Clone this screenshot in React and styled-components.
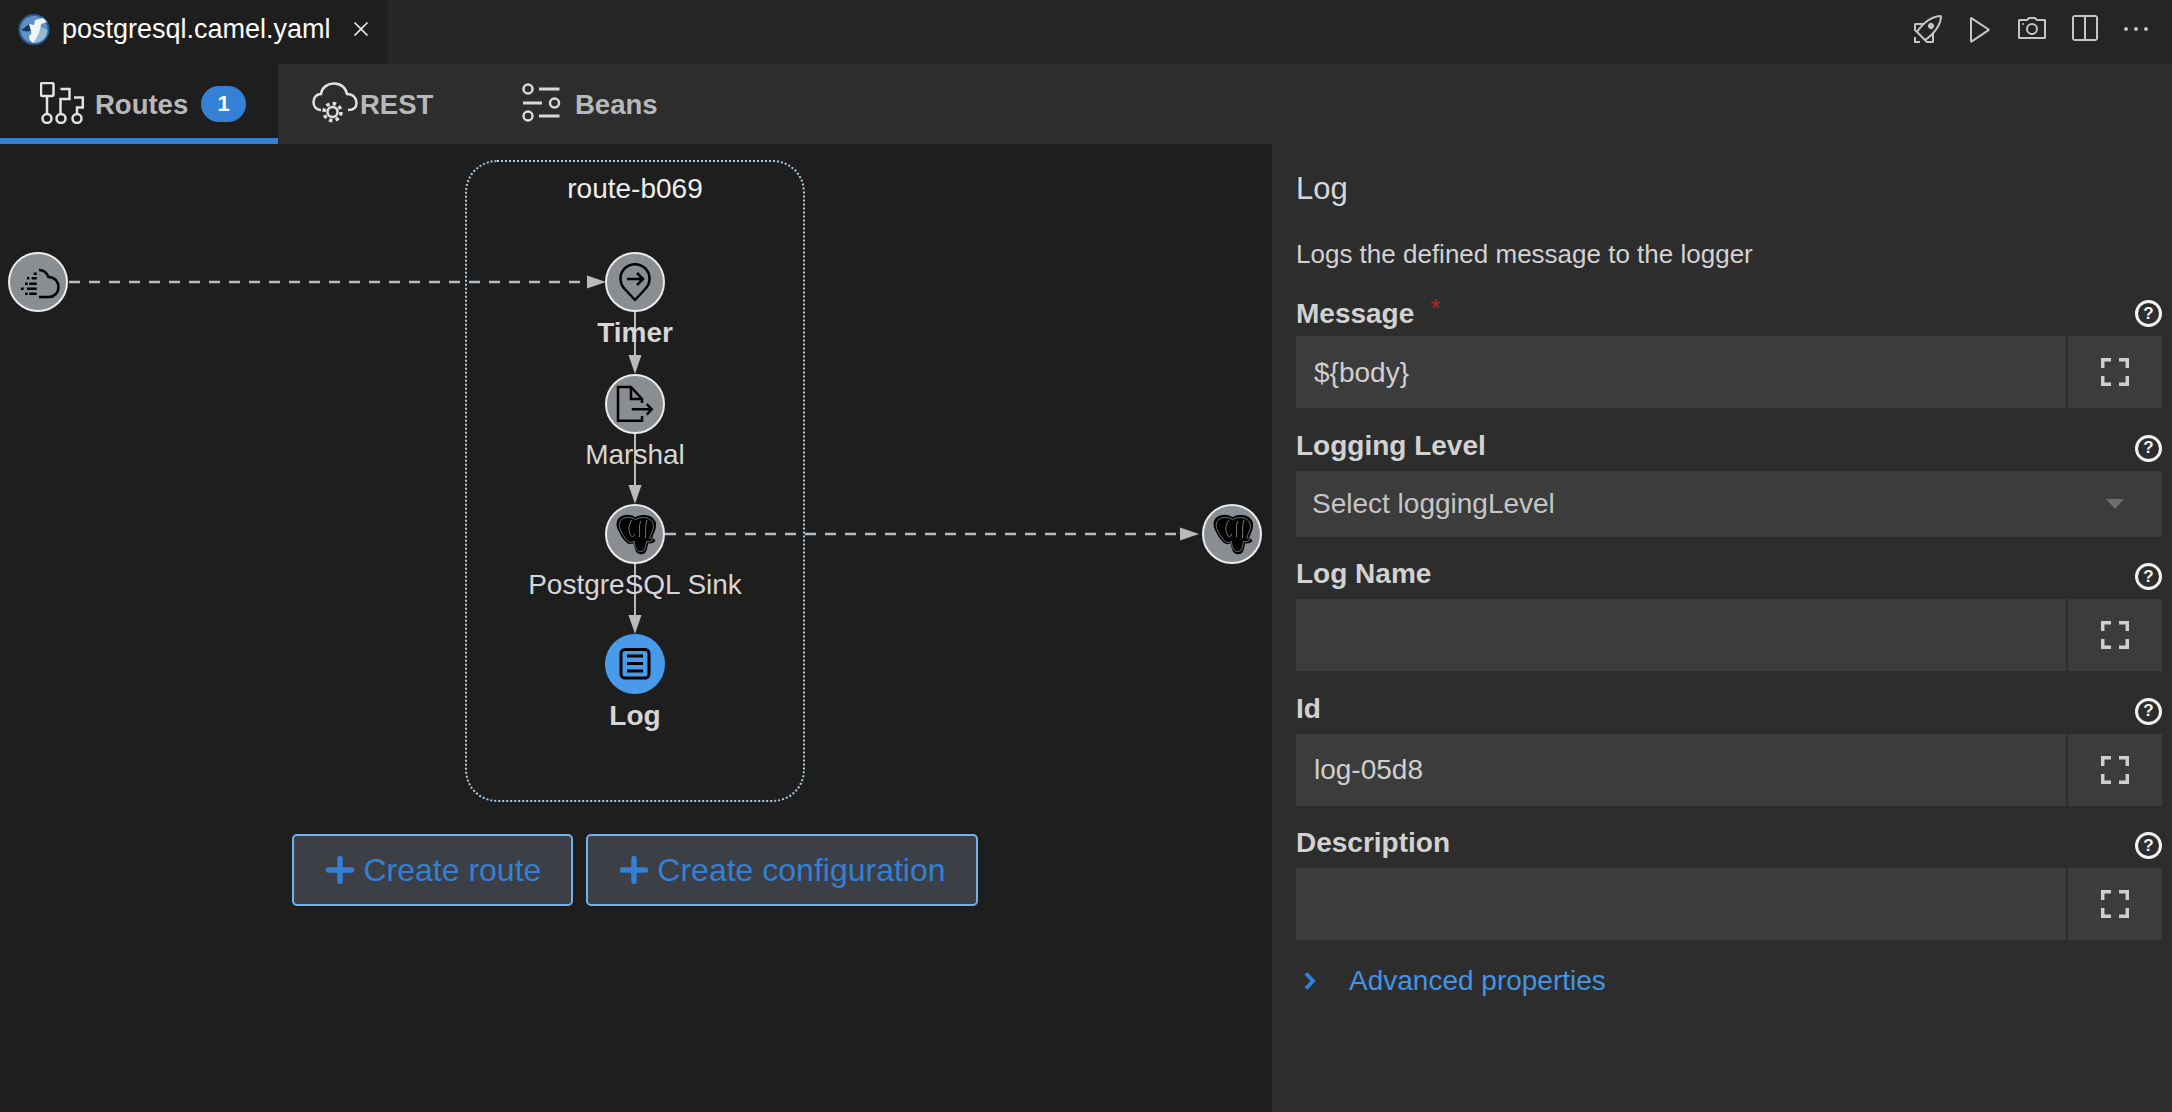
import React from "react";
import styled, { createGlobalStyle } from "styled-components";
import { VscRocket, VscPlay, VscDeviceCamera, VscSplitHorizontal, VscEllipsis, VscClose } from "react-icons/vsc";

const GlobalStyle = createGlobalStyle`
  html, body {
    margin: 0;
    padding: 0;
    background: #1e1e1e;
    overflow: hidden;
  }
  body {
    font-family: "Liberation Sans", Arial, sans-serif;
  }
`;

const Page = styled.div`
  width: 2172px;
  height: 1112px;
  display: flex;
  flex-direction: column;
  background: #1e1e1e;
`;

const EditorBar = styled.div`
  height: 64px;
  flex: none;
  display: flex;
  justify-content: space-between;
  background: #252526;
`;

const FileTab = styled.div`
  width: 387px;
  display: flex;
  align-items: center;
  padding: 0 0 6px 18px;
  box-sizing: border-box;
  background: #1e1e1e;
  color: #ffffff;
  font-size: 27px;
`;

const FileName = styled.span`
  margin-left: 12px;
`;

const CloseBtn = styled.span`
  display: flex;
  margin-left: 17px;
  font-size: 26px;
  color: #e8e8e8;
`;

const Actions = styled.div`
  display: flex;
  align-items: center;
  gap: 20px;
  padding: 0 20px 6px 0;
  font-size: 32px;
  color: #c5c5c5;
  svg {
    display: block;
  }
`;

const TabRow = styled.div`
  height: 80px;
  flex: none;
  display: flex;
  background: #2d2d2d;
`;

const Tab = styled.div`
  width: ${(p) => p.$width}px;
  box-sizing: border-box;
  display: flex;
  align-items: center;
  gap: ${(p) => p.$gap}px;
  padding: 8px 0 0 ${(p) => p.$pad}px;
  background: ${(p) => (p.$active ? "#1e1e1e" : "#2d2d2d")};
  border-bottom: 6px solid ${(p) => (p.$active ? "#3380d4" : "transparent")};
  color: #b8b8bb;
  font-size: 27.5px;
  font-weight: 700;
  svg {
    margin-top: -4px;
  }
`;

const Badge = styled.span`
  width: 45px;
  height: 36px;
  margin: -3px 0 0 3px;
  border-radius: 18px;
  background: #3380d4;
  color: #ffffff;
  font-size: 22px;
  display: flex;
  align-items: center;
  justify-content: center;
`;

const Body = styled.div`
  flex: 1;
  display: flex;
  min-height: 0;
`;

const Canvas = styled.div`
  width: 1272px;
  flex: none;
  display: flex;
  flex-direction: column;
  background: #1e1e1e;
`;

const Stage = styled.div`
  position: relative;
  height: 690px;
  flex: none;
`;

const RouteBox = styled.div`
  position: absolute;
  left: 465px;
  top: 16px;
  width: 340px;
  height: 642px;
  box-sizing: border-box;
  border: 2px dotted #a9cde6;
  border-radius: 32px;
`;

const Edges = styled.svg`
  position: absolute;
  left: 0;
  top: 0;
`;

const Node = styled.div`
  position: absolute;
  left: ${(p) => p.$x - 30}px;
  top: ${(p) => p.$y - 30}px;
  width: 60px;
  height: 60px;
  box-sizing: border-box;
  border-radius: 50%;
  border: 2px solid ${(p) => (p.$selected ? "#4a9aec" : "#ececec")};
  background: ${(p) => (p.$selected ? "#4a9aec" : "#8a8d91")};
  display: flex;
  align-items: center;
  justify-content: center;
  svg {
    flex: none;
    margin: -2px;
  }
`;

const NodeLabel = styled.div`
  position: absolute;
  left: 635px;
  top: ${(p) => p.$y - 16}px;
  transform: translateX(-50%);
  line-height: 32px;
  white-space: nowrap;
  font-size: 28px;
  font-weight: ${(p) => (p.$bold ? 700 : 400)};
  color: ${(p) => p.$color || "#d6d6d6"};
`;

const ButtonRow = styled.div`
  display: flex;
  justify-content: center;
  gap: 13px;
  padding-right: 2px;
`;

const CreateButton = styled.div`
  height: 72px;
  box-sizing: border-box;
  padding: 0 30px 0 32px;
  display: flex;
  align-items: center;
  gap: 9px;
  border: 2px solid #73b1ec;
  border-radius: 5px;
  background: #3c3f45;
  color: #3380d4;
  font-size: 32px;
`;

const Panel = styled.div`
  flex: 1;
  display: flex;
  flex-direction: column;
  background: #2d2d2d;
  padding: 27px 10px 0 24px;
`;

const PanelTitle = styled.div`
  font-size: 31px;
  line-height: 36px;
  color: #d8d8d8;
`;

const PanelDesc = styled.div`
  margin-top: 29px;
  font-size: 26px;
  line-height: 36px;
  color: #d2d2d2;
`;

const Fields = styled.div`
  margin-top: 21px;
  display: flex;
  flex-direction: column;
  gap: 19.5px;
`;

const Field = styled.div`
  display: flex;
  flex-direction: column;
`;

const LabelRow = styled.div`
  height: 36px;
  margin-bottom: 7px;
  display: flex;
  align-items: center;
  justify-content: space-between;
`;

const Label = styled.div`
  font-size: 28px;
  font-weight: 700;
  color: #d2d2d2;
`;

const Star = styled.span`
  margin-left: 16px;
  font-size: 26px;
  font-weight: 400;
  vertical-align: 6px;
  color: #b3261e;
`;

const Help = styled.span`
  width: 27px;
  height: 27px;
  margin-top: 5px;
  box-sizing: border-box;
  border: 3px solid #f2f2f2;
  border-radius: 50%;
  display: flex;
  align-items: center;
  justify-content: center;
  color: #f2f2f2;
  font-size: 17px;
  font-weight: 700;
`;

const InputRow = styled.div`
  height: 72px;
  display: flex;
`;

const InputBox = styled.div`
  flex: 1;
  display: flex;
  align-items: center;
  padding: 1px 0 0 18px;
  background: #3c3c3c;
  color: #cfcfcf;
  font-size: 28px;
`;

const ExpandBtn = styled.div`
  width: 96px;
  flex: none;
  box-sizing: border-box;
  border-left: 2px solid #2d2d2d;
  background: #3c3c3c;
  display: flex;
  align-items: center;
  justify-content: center;
`;

const SelectBox = styled.div`
  height: 66px;
  box-sizing: border-box;
  display: flex;
  align-items: center;
  justify-content: space-between;
  padding: 1px 38px 0 16px;
  background: #3c3c3c;
  color: #c6c6c6;
  font-size: 28px;
`;

const Caret = styled.span`
  width: 0;
  height: 0;
  border-left: 9px solid transparent;
  border-right: 9px solid transparent;
  border-top: 10px solid #6a6e73;
`;

const Advanced = styled.div`
  margin-top: 23px;
  height: 36px;
  display: flex;
  align-items: center;
  gap: 32px;
  padding-left: 7px;
  color: #4394e5;
  font-size: 28px;
`;

const CamelLogo = () => (
  <svg width="32" height="31" viewBox="0 0 32 31">
    <circle cx="16" cy="15.5" r="15.5" fill="#2b5f96" />
    <circle cx="16" cy="15.5" r="13.5" fill="#5d92c6" />
    <path d="M16 29 C24 29 29.5 23 29.5 16 L21 12 C20 18 18 24 15 29 Z" fill="#97bad2" />
    <path d="M3 16 L11 10 L16 11 L17 6 L25 4 L29 8 L23 10 C22 17 20 23 15 29 C12 27 11 25 11 22 C13 21 14 19 13 17 C10 18 6 18 3 16 Z" fill="#f4f7fa" />
    <path d="M3 16 L11 10 L13 17 C10 18 6 18 3 16 Z" fill="#17365f" />
  </svg>
);

const RoutesIcon = () => (
  <svg width="45" height="42" viewBox="0 0 45 42" fill="none" stroke="#e2e2e2" strokeWidth="2.5">
    <rect x="1" y="1" width="12.5" height="13" rx="1.5" />
    <path d="M7 14 V32 M20.5 7 H29.5 V17 H20.5 V32 M34 15.5 H42.8 V25.5 H37 V32" />
    <circle cx="7" cy="36.5" r="4.5" />
    <circle cx="21" cy="36.5" r="4.5" />
    <circle cx="37" cy="36.5" r="4.5" />
  </svg>
);

const RestIcon = () => (
  <svg width="46" height="42" viewBox="0 0 46 42" fill="none" stroke="#e2e2e2" strokeWidth="2.5">
    <path d="M9 28 C4 28 1.5 24 1.5 20 C1.5 15 5 12 9 12 C10 5 16 1.5 22 1.5 C29 1.5 34 6 35 12 C41 12 44.5 16 44.5 21 C44.5 25 42 28 36 28" />
    <circle cx="20.5" cy="30" r="5" strokeWidth="2.5" />
    <circle cx="20.5" cy="30" r="8.5" strokeWidth="3.5" strokeDasharray="3.4 3.27" />
  </svg>
);

const BeansIcon = () => (
  <svg width="40" height="40" viewBox="0 0 40 40" fill="none" stroke="#d8d8d8" strokeWidth="2.5">
    <circle cx="7" cy="6" r="4.5" />
    <path d="M18 6 H38.5" strokeWidth="3" />
    <path d="M2 20 H21" strokeWidth="3" />
    <circle cx="33.5" cy="20" r="4.5" />
    <circle cx="7" cy="33" r="4.5" />
    <path d="M18 33 H38.5" strokeWidth="3" />
  </svg>
);

const glyph = { width: 60, height: 60, viewBox: "0 0 60 60", fill: "none", stroke: "#000", strokeWidth: 2.5 };

const TimerIcon = () => (
  <svg {...glyph}>
    <path d="M30 48 L19.8 37 A14.5 14.5 0 1 1 40.2 37 Z" strokeLinejoin="round" />
    <path d="M22 27 H38 M32 21 L38 27 L32 33" />
  </svg>
);

const MarshalIcon = () => (
  <svg {...glyph}>
    <path d="M37 29 V25 L26 13 H13 V46.7 H37 V42" />
    <path d="M26 13 V25 H37" />
    <path d="M26.7 35.3 H46.7 M41.7 30 L46.7 35.3 L41.7 40.6" />
  </svg>
);

const LogIcon = () => (
  <svg {...glyph} strokeWidth="3">
    <rect x="16" y="15.5" width="28" height="28.5" rx="4" />
    <path d="M22 22 H38 M22 29.5 H38 M22 37 H38" />
  </svg>
);

const KameletIcon = () => (
  <svg {...glyph}>
    <path d="M31 18 C36 18 39 21 40.5 25 C47 25 50.5 30 50.5 35 C50.5 41 46 45 41 45 H31" />
    <path d="M25.7 21.7 H28.7 M19 26.3 H21.3 M23.7 26.3 H28.7 M17 31.7 H19.7 M21.3 31.7 H28.7 M13 36.7 H15.7 M19 36.7 H28.7 M17 41.7 H19.7 M21.3 41.7 H28.7" />
  </svg>
);

const elephantHead =
  "M19 12 C24 11 28 12 30.5 14 C34 11.5 41 11 45 13 C50 15.5 51 20 50 24 C49 28 47 31 46.5 34 C47.5 35.5 50 35.5 49.5 37 C48 38.5 45 39 42.5 38.5 C42 42 41.5 46 39.5 48.5 C37 50 33 50 31.5 47 C30 44 29.5 41 29 38 C27 39.5 24.5 40 22.5 38.5 C18.5 35 15 29 13 24 C11 18 13.5 13.5 19 12 Z";

// solid elephant head with the thin contour lines of the postgres logo
const PostgresIcon = () => (
  <svg width="60" height="60" viewBox="0 0 60 60" fill="none">
    <path d={elephantHead} fill="#000" stroke="#000" strokeWidth="1.5" />
    <path
      d={elephantHead}
      stroke="#85888c"
      strokeWidth="0.9"
      transform="translate(31 30) scale(0.9) translate(-31 -30)"
    />
    <path
      d="M27 16 C23.5 20 23 27 25.5 31 C27 33.5 29 33 29.5 30 M36 17 C33.5 21 35 27 34.5 33 M42 16 C40 21 41 28 40.5 34"
      stroke="#85888c"
      strokeWidth="0.9"
    />
  </svg>
);

const ExpandIcon = () => (
  <svg width="28" height="28" viewBox="0 0 28 28" fill="none" stroke="#cfcfcf" strokeWidth="3.5">
    <path d="M1.7 10 V1.7 H10 M18 1.7 H26.3 V10 M1.7 18 V26.3 H10 M18 26.3 H26.3 V18" />
  </svg>
);

const PlusIcon = () => (
  <svg width="28" height="28" viewBox="0 0 28 28" stroke="#3380d4" strokeWidth="5.5" strokeLinecap="round">
    <path d="M14 2.5 V25.5 M2.5 14 H25.5" />
  </svg>
);

const ChevronIcon = () => (
  <svg width="14" height="18" viewBox="0 0 14 18" fill="none" stroke="#3380d4" strokeWidth="4">
    <path d="M3 1.5 L10 9 L3 16.5" />
  </svg>
);

const fields = [
  { label: "Message", required: true, value: "${body}" },
  { label: "Logging Level", select: "Select loggingLevel" },
  { label: "Log Name", value: "" },
  { label: "Id", value: "log-05d8" },
  { label: "Description", value: "" },
];

const Arrow = ({ x, y, dir }) =>
  dir === "down" ? (
    <polygon points={`${x - 6.5},${y - 19} ${x + 6.5},${y - 19} ${x},${y}`} fill="#b8bbbe" />
  ) : (
    <polygon points={`${x - 19},${y - 6.5} ${x - 19},${y + 6.5} ${x},${y}`} fill="#b8bbbe" />
  );

const Graph = () => (
  <Stage>
    <RouteBox />
    <Edges width="1272" height="690" fill="none" stroke="#b8bbbe" strokeWidth="2.5">
      <path d="M69 138 H590" strokeDasharray="11 9" />
      <path d="M665 390 H1182" strokeDasharray="11 9" />
      <path d="M635 167 V215 M635 289 V345 M635 419 V475" strokeWidth="2" />
      <g stroke="none">
        <Arrow x={606} y={138} />
        <Arrow x={1199} y={390} />
        <Arrow x={635} y={230} dir="down" />
        <Arrow x={635} y={360} dir="down" />
        <Arrow x={635} y={490} dir="down" />
      </g>
    </Edges>
    <NodeLabel $y={45} $color="#eeeeee">route-b069</NodeLabel>
    <Node $x={38} $y={138}><KameletIcon /></Node>
    <Node $x={635} $y={138}><TimerIcon /></Node>
    <NodeLabel $y={189} $bold>Timer</NodeLabel>
    <Node $x={635} $y={260}><MarshalIcon /></Node>
    <NodeLabel $y={311}>Marshal</NodeLabel>
    <Node $x={635} $y={390}><PostgresIcon /></Node>
    <NodeLabel $y={441}>PostgreSQL Sink</NodeLabel>
    <Node $x={635} $y={520} $selected><LogIcon /></Node>
    <NodeLabel $y={572} $bold>Log</NodeLabel>
    <Node $x={1232} $y={390}><PostgresIcon /></Node>
  </Stage>
);

export default function App() {
  return (
    <Page>
      <GlobalStyle />
      <EditorBar>
        <FileTab>
          <CamelLogo />
          <FileName>postgresql.camel.yaml</FileName>
          <CloseBtn><VscClose /></CloseBtn>
        </FileTab>
        <Actions>
          <VscRocket />
          <VscPlay />
          <VscDeviceCamera />
          <VscSplitHorizontal />
          <VscEllipsis />
        </Actions>
      </EditorBar>
      <TabRow>
        <Tab $active $width={278} $pad={40} $gap={10}>
          <RoutesIcon />
          Routes
          <Badge>1</Badge>
        </Tab>
        <Tab $width={209} $pad={34} $gap={2}>
          <RestIcon />
          REST
        </Tab>
        <Tab $width={300} $pad={34} $gap={14}>
          <BeansIcon />
          Beans
        </Tab>
      </TabRow>
      <Body>
        <Canvas>
          <Graph />
          <ButtonRow>
            <CreateButton><PlusIcon />Create route</CreateButton>
            <CreateButton><PlusIcon />Create configuration</CreateButton>
          </ButtonRow>
        </Canvas>
        <Panel>
          <PanelTitle>Log</PanelTitle>
          <PanelDesc>Logs the defined message to the logger</PanelDesc>
          <Fields>
            {fields.map((f) => (
              <Field key={f.label}>
                <LabelRow>
                  <Label>
                    {f.label}
                    {f.required && <Star>*</Star>}
                  </Label>
                  <Help>?</Help>
                </LabelRow>
                {f.select ? (
                  <SelectBox>
                    {f.select}
                    <Caret />
                  </SelectBox>
                ) : (
                  <InputRow>
                    <InputBox>{f.value}</InputBox>
                    <ExpandBtn><ExpandIcon /></ExpandBtn>
                  </InputRow>
                )}
              </Field>
            ))}
          </Fields>
          <Advanced>
            <ChevronIcon />
            Advanced properties
          </Advanced>
        </Panel>
      </Body>
    </Page>
  );
}
